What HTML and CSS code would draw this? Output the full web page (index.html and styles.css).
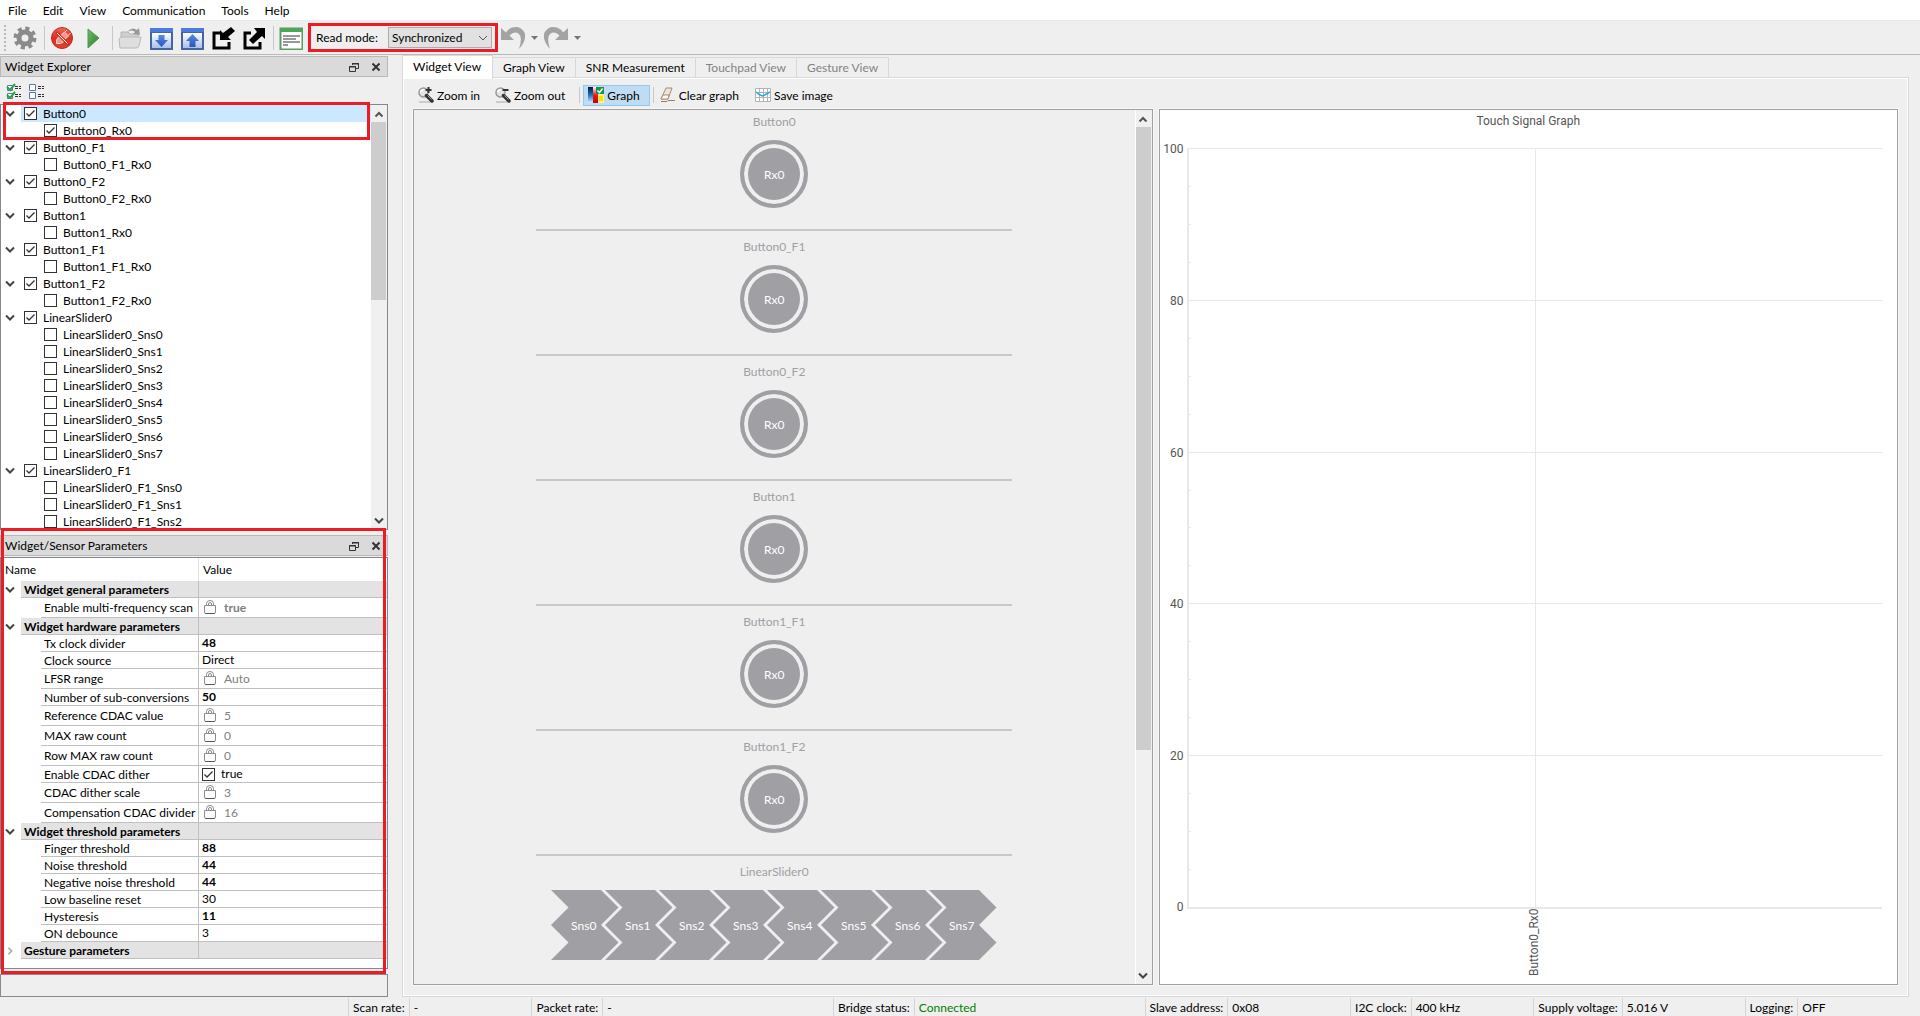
FILE: index.html
```html
<!DOCTYPE html>
<html lang="en">
<head>
<meta charset="utf-8">
<title>Tuner</title>
<link rel="stylesheet" href="styles.css">
</head>
<body>
<svg class="defs" aria-hidden="true">
  <defs>
    <linearGradient id="g-red" x1="0" y1="0" x2="0" y2="1"><stop offset="0" stop-color="#f06a55"/><stop offset=".5" stop-color="#d8301f"/><stop offset="1" stop-color="#e0442c"/></linearGradient>
    <linearGradient id="g-green" x1="0" y1="0" x2="1" y2="1"><stop offset="0" stop-color="#6cbf6a"/><stop offset="1" stop-color="#2c7a2c"/></linearGradient>
    <linearGradient id="g-pane" x1="0" y1="0" x2="0" y2="1"><stop offset="0" stop-color="#fff"/><stop offset="1" stop-color="#a9c0ea"/></linearGradient>
    <linearGradient id="g-arrow" x1="0" y1="0" x2="0" y2="1"><stop offset="0" stop-color="#5b8ae6"/><stop offset="1" stop-color="#2a55b8"/></linearGradient>
    <linearGradient id="g-heat" x1="0" y1="0" x2="0" y2="1"><stop offset="0" stop-color="#08182c"/><stop offset=".5" stop-color="#1573c4"/><stop offset="1" stop-color="#d8eefa"/></linearGradient>
    <linearGradient id="g-heat2" x1="0" y1="0" x2="0" y2="1"><stop offset="0" stop-color="#fff"/><stop offset=".5" stop-color="#f01818"/><stop offset="1" stop-color="#c80000"/></linearGradient>
  </defs>
  <symbol id="chev-down" viewBox="0 0 10 8"><path d="M1 1.500 5 5.500 9 1.500" fill="none" stroke="#444" stroke-width="2"/></symbol>
  <symbol id="chev-right" viewBox="0 0 10 10"><path d="M3 1 7 5 3 9" fill="none" stroke="#a8a8a8" stroke-width="2"/></symbol>
  <symbol id="chev-up" viewBox="0 0 10 8"><path d="M1.500 6.500 5 3 8.500 6.500" fill="none" stroke="#555" stroke-width="2"/></symbol>
  <symbol id="restore" viewBox="0 0 10 10"><path d="M3.500 3V1.500H9.500V6.500H7M3 1.500H10" fill="none" stroke="#333"/><path d="M.5 4.500H6.500V9.500H.5zM0 5H7M3 2H10" fill="none" stroke="#333"/></symbol>
  <symbol id="close" viewBox="0 0 10 10"><path d="M1.500 1.500 8.500 8.500M8.500 1.500 1.500 8.500" stroke="#333" stroke-width="2"/></symbol>
  <symbol id="lock" viewBox="0 0 14 15"><path d="M3.500 6V3.500Q3.500 .5 7 .5T10.500 3.500V6M5.500 6V4Q5.500 2.500 7 2.500T8.500 4V6" fill="none" stroke="#8a8a8a"/><path d="M1.500 5.500H12.500V12Q12.500 13.500 11 13.500H3Q1.500 13.500 1.500 12z" fill="#fdfdfd" stroke="#8c8c8c"/><path d="M2.500 13.500H11.500" stroke="#555"/></symbol>
  <symbol id="undo" viewBox="0 0 24 24"><path d="M0 2V14H13L8.500 9.500Q13 4.500 17.500 7.500 22 11 18 23 26 14 23.500 6.500 19.500-1 11 1.500 7 3 5 6.500z" fill="#a3a3a3"/></symbol>
  <symbol id="mag" viewBox="0 0 16 16"><path d="M1 15H13" stroke="#ccc" stroke-width="2"/><circle cx="5.500" cy="5.500" r="4.500" fill="#e4e4e4" stroke="#999" stroke-width="1.500"/><path d="M2.500 5Q3 3 6 2.500" stroke="#fff" fill="none" stroke-width="1.500"/><path d="M8.500 8.500 14 14" stroke="#333" stroke-width="3.500" stroke-linecap="round"/><path d="M9.500 8.500 13.500 12.500" stroke="#999"/></symbol>
  <symbol id="sensor" viewBox="0 0 68 70"><path d="M0 0H50L67.500 17.500 50 35 67.500 52.500 50 70H0L17.500 52.500 0 35 17.500 17.500z" fill="#a09fa4"/></symbol>
</svg>

<nav class="menubar">
  <button>File</button><button>Edit</button><button>View</button><button>Communication</button><button>Tools</button><button>Help</button>
</nav>

<header class="toolbar">
  <span class="grip"></span>
  <button class="tool" aria-label="Settings"><svg width="24" height="24" viewBox="0 0 24 24"><circle cx="12" cy="12" r="6" fill="none" stroke="#8b8b8b" stroke-width="5"/><circle cx="12" cy="12" r="9.500" fill="none" stroke="#8b8b8b" stroke-width="4" stroke-dasharray="4 3.460"/></svg></button>
  <span class="sep"></span>
  <button class="tool" aria-label="Disconnect"><svg width="24" height="24" viewBox="0 0 24 24"><circle cx="12" cy="12" r="10.500" fill="url(#g-red)" stroke="#c22a1c"/><path d="M6.500 17.500Q5.500 13 9 10.500L14 15.500Q11 18.500 6.500 17.500zM11 9 14.500 6 18.500 10 15.500 13zM15 6 17 4M18.500 9 20.500 7" fill="#ee9a8c" stroke="#f8d6d0"/><path d="M6 6 19 19" stroke="#d8301f" stroke-width="3"/><path d="M7 7 17.500 17.500" stroke="#fff"/></svg></button>
  <button class="tool" aria-label="Start"><svg width="24" height="24" viewBox="0 0 24 24"><path d="M7 3 18 12 7 22z" fill="url(#g-green)" stroke="#4d9a4c"/></svg></button>
  <span class="sep"></span>
  <button class="tool" aria-label="Open"><svg width="24" height="24" viewBox="0 0 24 24"><path d="M3 22V6H10L12 8H20V12" fill="#d0d0d0" stroke="#b5b5b5"/><path d="M1 13Q2 11 4 11H23L21 20Q20.500 22 18 22H2z" fill="#dedede" stroke="#b8b8b8"/><path d="M9 6Q14 0 19 4L21 2 22 9 15 8 17 6Q14 3 9 6z" fill="#999"/></svg></button>
  <button class="tool" aria-label="Read from device"><svg width="24" height="24" viewBox="0 0 24 24"><path d="M1 2H24V24H1z" fill="#46659f"/><path d="M1 2H24V6H1z" fill="#4a7ce0"/><path d="M3 7H22V22H3z" fill="url(#g-pane)"/><path d="M9.500 9H15.500V14H19L12.500 21 6 14H9.500z" fill="url(#g-arrow)"/></svg></button>
  <button class="tool" aria-label="Write to device"><svg width="24" height="24" viewBox="0 0 24 24"><path d="M1 2H24V24H1z" fill="#46659f"/><path d="M1 2H24V6H1z" fill="#4a7ce0"/><path d="M3 7H22V22H3z" fill="url(#g-pane)"/><path d="M9.500 21H15.500V15H19L12.500 8 6 15H9.500z" fill="url(#g-arrow)"/></svg></button>
  <button class="tool" aria-label="Import"><svg width="24" height="24" viewBox="0 0 24 24"><path d="M9 7H3V22H18V16" fill="none" stroke="#000" stroke-width="3"/><path d="M20 1 24 5 17 11 20 14H9V4L12 7z" fill="#000"/></svg></button>
  <button class="tool" aria-label="Export"><svg width="24" height="24" viewBox="0 0 24 24"><path d="M9 7H3V22H18V16" fill="none" stroke="#000" stroke-width="3"/><path d="M12 2H23V13L20 10 11 18 7 14 15 6z" fill="#000"/></svg></button>
  <span class="sep"></span>
  <button class="tool" aria-label="Log"><svg width="24" height="24" viewBox="0 0 24 24"><path d="M1.500 2.500H23.500V23.500H1.500z" fill="#fff" stroke="#5f9a62" stroke-width="2"/><path d="M1 2H24V6H1z" fill="#4ca857"/><path d="M4 10H21M4 13H17M4 16H21M4 19H9" stroke="#333"/></svg></button>
  <div class="read-mode marked">
    <label for="mode">Read mode:</label>
    <div class="combo">
      <select id="mode"><option>Synchronized</option><option>Asynchronous</option></select>
      <svg class="combo-arrow" width="10" height="8" viewBox="0 0 10 8"><path d="M1 2 5 6 9 2" fill="none" stroke="#555"/></svg>
    </div>
  </div>
  <button class="hist" aria-label="Undo"><svg width="24" height="24"><use href="#undo"/></svg><svg width="7" height="4" viewBox="0 0 7 4"><path d="M0 0H7L3.500 4z" fill="#777"/></svg></button>
  <button class="hist" aria-label="Redo"><svg class="flip" width="24" height="24"><use href="#undo"/></svg><svg width="7" height="4" viewBox="0 0 7 4"><path d="M0 0H7L3.500 4z" fill="#777"/></svg></button>
</header>

<main class="workspace">
  <aside class="docks">
    <section class="dock explorer">
      <h2 class="dock-title"><span>Widget Explorer</span><button aria-label="Float"><svg width="10" height="10"><use href="#restore"/></svg></button><button aria-label="Close"><svg width="10" height="10"><use href="#close"/></svg></button></h2>
      <div class="tree-tools">
        <button aria-label="Check all"><svg width="16" height="16" viewBox="0 0 16 16"><path d="M1.500 2.500H6.500V7.500H1.500zM1.500 10.500H6.500V15.500H1.500z" fill="#fff" stroke="#5c78a8"/><path d="M1 4 4 7 9 1M1 12 4 15 9 9" fill="none" stroke="#27a348" stroke-width="2"/><path d="M9 3.500H15M9 5.500H15M9 11.500H15M9 13.500H15" stroke="#333" stroke-dasharray="3 1"/></svg></button>
        <button aria-label="Uncheck all"><svg width="16" height="16" viewBox="0 0 16 16"><path d="M.5 1.500H6.500V7.500H.5zM.5 9.500H6.500V15.500H.5z" fill="#fff" stroke="#5c78a8"/><path d="M9 3.500H15M9 5.500H15M9 11.500H15M9 13.500H15" stroke="#333" stroke-dasharray="3 1"/></svg></button>
      </div>
      <div class="tree-frame">
        <ul class="tree">
          <li><div class="node selected"><svg class="exp"><use href="#chev-down"/></svg><label><input type="checkbox" checked>Button0</label></div>
            <ul><li><label><input type="checkbox" checked>Button0_Rx0</label></li></ul></li>
          <li><div class="node"><svg class="exp"><use href="#chev-down"/></svg><label><input type="checkbox" checked>Button0_F1</label></div>
            <ul><li><label><input type="checkbox">Button0_F1_Rx0</label></li></ul></li>
          <li><div class="node"><svg class="exp"><use href="#chev-down"/></svg><label><input type="checkbox" checked>Button0_F2</label></div>
            <ul><li><label><input type="checkbox">Button0_F2_Rx0</label></li></ul></li>
          <li><div class="node"><svg class="exp"><use href="#chev-down"/></svg><label><input type="checkbox" checked>Button1</label></div>
            <ul><li><label><input type="checkbox">Button1_Rx0</label></li></ul></li>
          <li><div class="node"><svg class="exp"><use href="#chev-down"/></svg><label><input type="checkbox" checked>Button1_F1</label></div>
            <ul><li><label><input type="checkbox">Button1_F1_Rx0</label></li></ul></li>
          <li><div class="node"><svg class="exp"><use href="#chev-down"/></svg><label><input type="checkbox" checked>Button1_F2</label></div>
            <ul><li><label><input type="checkbox">Button1_F2_Rx0</label></li></ul></li>
          <li><div class="node"><svg class="exp"><use href="#chev-down"/></svg><label><input type="checkbox" checked>LinearSlider0</label></div>
            <ul>
              <li><label><input type="checkbox">LinearSlider0_Sns0</label></li>
              <li><label><input type="checkbox">LinearSlider0_Sns1</label></li>
              <li><label><input type="checkbox">LinearSlider0_Sns2</label></li>
              <li><label><input type="checkbox">LinearSlider0_Sns3</label></li>
              <li><label><input type="checkbox">LinearSlider0_Sns4</label></li>
              <li><label><input type="checkbox">LinearSlider0_Sns5</label></li>
              <li><label><input type="checkbox">LinearSlider0_Sns6</label></li>
              <li><label><input type="checkbox">LinearSlider0_Sns7</label></li>
            </ul></li>
          <li><div class="node"><svg class="exp"><use href="#chev-down"/></svg><label><input type="checkbox" checked>LinearSlider0_F1</label></div>
            <ul>
              <li><label><input type="checkbox">LinearSlider0_F1_Sns0</label></li>
              <li><label><input type="checkbox">LinearSlider0_F1_Sns1</label></li>
              <li><label><input type="checkbox">LinearSlider0_F1_Sns2</label></li>
            </ul></li>
        </ul>
        <div class="scrollbar"><svg width="10" height="8"><use href="#chev-up"/></svg><span class="thumb tree-thumb"></span><svg width="10" height="8"><use href="#chev-down"/></svg></div>
        <span class="callout tree-callout"></span>
      </div>
    </section>

    <section class="dock params">
      <h2 class="dock-title"><span>Widget/Sensor Parameters</span><button aria-label="Float"><svg width="10" height="10"><use href="#restore"/></svg></button><button aria-label="Close"><svg width="10" height="10"><use href="#close"/></svg></button></h2>
      <div class="table-frame">
        <table>
          <thead><tr><th scope="col">Name</th><th scope="col">Value</th></tr></thead>
          <tbody>
            <tr class="group"><th><div><svg class="exp"><use href="#chev-down"/></svg><span>Widget general parameters</span></div></th><td></td></tr>
            <tr class="locked"><th><span>Enable multi-frequency scan</span></th><td><svg class="lock"><use href="#lock"/></svg><b>true</b></td></tr>
            <tr class="group"><th><div><svg class="exp"><use href="#chev-down"/></svg><span>Widget hardware parameters</span></div></th><td></td></tr>
            <tr><th><span>Tx clock divider</span></th><td><b>48</b></td></tr>
            <tr><th><span>Clock source</span></th><td>Direct</td></tr>
            <tr class="locked"><th><span>LFSR range</span></th><td><svg class="lock"><use href="#lock"/></svg>Auto</td></tr>
            <tr><th><span>Number of sub-conversions</span></th><td><b>50</b></td></tr>
            <tr class="locked"><th><span>Reference CDAC value</span></th><td><svg class="lock"><use href="#lock"/></svg>5</td></tr>
            <tr class="locked"><th><span>MAX raw count</span></th><td><svg class="lock"><use href="#lock"/></svg>0</td></tr>
            <tr class="locked"><th><span>Row MAX raw count</span></th><td><svg class="lock"><use href="#lock"/></svg>0</td></tr>
            <tr><th><span>Enable CDAC dither</span></th><td><label><input type="checkbox" checked>true</label></td></tr>
            <tr class="locked"><th><span>CDAC dither scale</span></th><td><svg class="lock"><use href="#lock"/></svg>3</td></tr>
            <tr class="locked"><th><span>Compensation CDAC divider</span></th><td><svg class="lock"><use href="#lock"/></svg>16</td></tr>
            <tr class="group"><th><div><svg class="exp"><use href="#chev-down"/></svg><span>Widget threshold parameters</span></div></th><td></td></tr>
            <tr><th><span>Finger threshold</span></th><td><b>88</b></td></tr>
            <tr><th><span>Noise threshold</span></th><td><b>44</b></td></tr>
            <tr><th><span>Negative noise threshold</span></th><td><b>44</b></td></tr>
            <tr><th><span>Low baseline reset</span></th><td>30</td></tr>
            <tr><th><span>Hysteresis</span></th><td><b>11</b></td></tr>
            <tr><th><span>ON debounce</span></th><td>3</td></tr>
            <tr class="group"><th><div><svg class="exp"><use href="#chev-right"/></svg><span>Gesture parameters</span></div></th><td></td></tr>
          </tbody>
        </table>
      </div>
      <span class="callout params-callout"></span>
    </section>
    <div class="progress"></div>
  </aside>

  <section class="views">
    <div class="tabs" role="tablist">
      <button role="tab" aria-selected="true">Widget View</button><button role="tab">Graph View</button><button role="tab">SNR Measurement</button><button role="tab" disabled>Touchpad View</button><button role="tab" disabled>Gesture View</button>
    </div>
    <div class="pane">
      <div class="view-tools">
        <button><svg width="16" height="16" viewBox="0 0 16 16"><use href="#mag"/><path d="M10.500 0V6M7.500 3H13.500" stroke="#333" stroke-width="2"/></svg>Zoom in</button>
        <button class="zoom-out"><svg width="16" height="16" viewBox="0 0 16 16"><use href="#mag"/><path d="M7.500 3H13.500" stroke="#333" stroke-width="2"/></svg>Zoom out</button>
        <span class="vsep"></span>
        <button class="on" aria-pressed="true"><svg width="16" height="16" viewBox="0 0 16 16"><path d="M0 0H5V16H0z" fill="url(#g-heat)"/><path d="M5 0H10V16H5z" fill="url(#g-heat2)"/><path d="M10 7H16V16H10z" fill="#fff38a"/><path d="M11 9H15V14H11z" fill="#ffe000"/><path d="M8 0H16V7H8z" fill="#16924a"/><path d="M9.500 3.500 11.500 5.500 14.500 1.500" fill="none" stroke="#fff" stroke-width="1.500"/></svg>Graph</button>
        <span class="vsep"></span>
        <button><svg width="16" height="16" viewBox="0 0 16 16"><path d="M6 1 12 1 8 12 1 12z" fill="#efe3d6" stroke="#a58d78"/><path d="M1 12 3 8 9 8 8 12z" fill="#fff" stroke="#a58d78"/><path d="M1 14.500H7L8 13.500H15" fill="none" stroke="#9a7a60"/></svg>Clear graph</button>
        <button class="save"><svg width="16" height="16" viewBox="0 0 16 16"><path d="M.5 1.500H15.500V14.500H.5zM.5 5.500H15.500M.5 10.500H15.500M4.500 1.500V14.500M8.500 1.500V14.500M12.500 1.500V14.500" fill="#fff" stroke="#b4b4b4"/><path d="M1 5 5 8 8 9 15 5" fill="none" stroke="#22aeda" stroke-width="1.500"/></svg>Save image</button>
      </div>
      <div class="split">
        <div class="sunken widget-view">
          <div class="canvas">
            <article class="widget"><h3>Button0</h3><div class="pad">Rx0</div></article>
            <article class="widget"><h3>Button0_F1</h3><div class="pad">Rx0</div></article>
            <article class="widget"><h3>Button0_F2</h3><div class="pad">Rx0</div></article>
            <article class="widget"><h3>Button1</h3><div class="pad">Rx0</div></article>
            <article class="widget"><h3>Button1_F1</h3><div class="pad">Rx0</div></article>
            <article class="widget"><h3>Button1_F2</h3><div class="pad">Rx0</div></article>
            <article class="widget slider"><h3>LinearSlider0</h3>
              <div class="sensors">
                <div><svg><use href="#sensor"/></svg><span>Sns0</span></div>
                <div><svg><use href="#sensor"/></svg><span>Sns1</span></div>
                <div><svg><use href="#sensor"/></svg><span>Sns2</span></div>
                <div><svg><use href="#sensor"/></svg><span>Sns3</span></div>
                <div><svg><use href="#sensor"/></svg><span>Sns4</span></div>
                <div><svg><use href="#sensor"/></svg><span>Sns5</span></div>
                <div><svg><use href="#sensor"/></svg><span>Sns6</span></div>
                <div><svg><use href="#sensor"/></svg><span>Sns7</span></div>
              </div></article>
          </div>
          <div class="scrollbar edge"><svg width="10" height="8"><use href="#chev-up"/></svg><span class="thumb view-thumb"></span><svg width="10" height="8"><use href="#chev-down"/></svg></div>
        </div>
        <figure class="sunken graph">
          <figcaption>Touch Signal Graph</figcaption>
          <div class="plot">
            <div class="band"><span>100</span><i></i><i></i><i></i></div>
            <div class="band"><span>80</span><i></i><i></i><i></i></div>
            <div class="band"><span>60</span><i></i><i></i><i></i></div>
            <div class="band"><span>40</span><i></i><i></i><i></i></div>
            <div class="band"><span>20</span><i></i><i></i><i></i></div>
            <div class="zero"><span>0</span></div>
          </div>
          <div class="category"><span>Button0_Rx0</span></div>
        </figure>
      </div>
    </div>
  </section>
</main>

<footer class="status">
  <dl>
    <dt>Scan rate:</dt><dd>-</dd>
    <dt>Packet rate:</dt><dd class="wide">-</dd>
    <dt>Bridge status:</dt><dd class="wide ok">Connected</dd>
    <dt>Slave address:</dt><dd>0x08</dd>
    <dt>I2C clock:</dt><dd>400 kHz</dd>
    <dt>Supply voltage:</dt><dd>5.016 V</dd>
    <dt>Logging:</dt><dd>OFF</dd>
  </dl>
</footer>
</body>
</html>
```
FILE: styles.css
```css
* { box-sizing: border-box; }
body {
  margin: 0;
  height: 100vh;
  display: flex;
  flex-direction: column;
  background: #efefef;
  color: #000;
  font: 12px/17px Lato, "Open Sans", sans-serif;
  overflow: hidden;
}
button, select, input { font: inherit; color: inherit; margin: 0; }
button { background: none; border: 0; padding: 0; }
h2, h3, ul, dl, dd, figure { margin: 0; padding: 0; font-size: 12px; font-weight: 400; list-style: none; }
svg { display: block; flex: none; }
.defs { position: absolute; width: 0; height: 0; }

input[type="checkbox"] {
  appearance: none;
  flex: none;
  width: 13px;
  height: 13px;
  margin: 0 6px 0 0;
  border: 1px solid #333;
  background: #fff;
}
input[type="checkbox"]:checked {
  background: #fff url("data:image/svg+xml,%3Csvg xmlns='http://www.w3.org/2000/svg' viewBox='0 0 11 11'%3E%3Cpath d='M1.500 5.500 4 8 9.500 2.500' fill='none' stroke='%23333' stroke-width='1.300'/%3E%3C/svg%3E");
}

/* menu and main toolbar */
.menubar {
  display: flex;
  gap: 16px;
  height: 21px;
  padding: 2px 8px 1px;
  background: #fff;
  border-bottom: 1px solid #ebebeb;
}
.toolbar {
  display: flex;
  align-items: center;
  height: 34px;
  padding-left: 4px;
  border-bottom: 1px solid #b9b9b9;
}
.grip { width: 2px; height: 26px; margin-right: 7px; background: repeating-linear-gradient(#bbb 0 2px, transparent 2px 4px); }
.tool { margin-right: 7px; }
.sep { width: 1px; height: 24px; margin-right: 5px; background: #c8c8c8; }
.marked { border: 3px solid #ed1c24; }
.read-mode { display: flex; align-items: center; width: 190px; height: 29px; margin-left: -2px; padding-left: 5px; }
.read-mode label { width: 72px; white-space: nowrap; }
.combo { position: relative; width: 104px; height: 21px; }
.combo select {
  appearance: none;
  width: 100%;
  height: 21px;
  padding: 0 18px 1px 3px;
  border: 1px solid #adadad;
  border-radius: 0;
  background: #e1e1e1;
}
.combo-arrow { position: absolute; right: 4px; top: 7px; }
.hist { display: flex; align-items: center; gap: 6px; margin: 0 3px; }
.flip { transform: scaleX(-1); }

/* left docks */
.workspace { flex: 1; min-height: 0; display: flex; gap: 14px; padding-top: 1px; }
.docks { flex: none; width: 388px; display: flex; flex-direction: column; }
.dock-title {
  display: flex;
  align-items: center;
  gap: 12px;
  height: 21px;
  padding: 0 6px 0 4px;
  background: #dadada;
  border: 1px solid #b9b9b9;
}
.dock-title span { flex: 1; }
.explorer { flex: 1; min-height: 0; display: flex; flex-direction: column; }
.tree-tools { display: flex; gap: 7px; padding: 6px 6px 5px; }
.tree-frame {
  position: relative;
  flex: 1;
  min-height: 0;
  display: flex;
  background: #fff;
  border: 1px solid #828790;
}
.tree { flex: 1; overflow: hidden; }
.tree label { display: flex; align-items: center; height: 17px; }
.node { display: flex; align-items: center; padding-left: 4px; }
.node label { flex: 1; padding-left: 3px; margin-left: 6px; }
.node.selected label { background: #cce8ff; }
.tree ul { padding-left: 43px; }
.exp { width: 10px; height: 8px; }
.scrollbar {
  flex: none;
  width: 16px;
  display: flex;
  flex-direction: column;
  align-items: center;
  justify-content: space-between;
  padding: 5px 1px 4px 0;
  background: #f0f0f0;
}
.thumb { width: 15px; background: #cdcdcd; margin-top: 4px; }
.scrollbar svg:last-child { margin-top: auto; }
.tree-thumb { height: 43%; }
.callout { position: absolute; border: 3px solid #ed1c24; pointer-events: none; }
.tree-callout { left: 2px; right: 17px; top: -3px; height: 38px; }

.params { position: relative; padding-top: 5px; }
.params-callout { left: 1px; right: 2px; top: -2px; bottom: -5px; }
.table-frame { margin-top: 1px; background: #fff; border: 1px solid #828790; padding-bottom: 9px; }
table { width: 100%; border-collapse: separate; border-spacing: 0; table-layout: fixed; }
th, td { padding: 0; height: 17px; text-align: left; font-weight: 400; vertical-align: top; line-height: 17px; white-space: nowrap; }
thead th { height: 23px; padding-left: 4px; line-height: 23px; }
thead th:first-child { width: 198px; border-right: 1px solid #e2e2e2; }
tbody th { padding-left: 40px; border-right: 1px solid #c0c0c0; overflow: hidden; }
tbody th span { display: block; height: 17px; padding-left: 3px; border-bottom: 1px solid #c0c0c0; }
tbody td { padding-left: 3px; border-bottom: 1px solid #c0c0c0; line-height: 16px; }
td label { display: flex; align-items: center; height: 16px; }
.group th { padding-left: 4px; font-weight: 700; }
.group div { display: flex; align-items: center; }
.group span { flex: 1; margin-left: 6px; background: #e3e3e3; }
.group td { background: #e3e3e3; }
.locked td { height: 20px; line-height: 19px; color: #808080; }
.locked th span { height: 20px; line-height: 20px; }
.lock { float: left; width: 14px; height: 15px; margin: 2px 7px 0 1px; }
.progress { height: 23px; margin: 5px 0 0; border: 1px solid #8a8a8a; }

/* tabbed views */
.views { flex: 1; min-width: 0; display: flex; flex-direction: column; padding-right: 11px; }
.tabs { display: flex; align-items: flex-end; height: 21px; }
.tabs button { height: 20px; padding: 0 10px; border: solid #d9d9d9; border-width: 1px 1px 0 0; line-height: 18px; }
.tabs button:disabled { color: #838383; }
.tabs button[aria-selected="true"] { height: 24px; margin-bottom: -2px; padding: 0 11px 2px 10px; border-left-width: 1px; background: #fff; z-index: 1; }
.pane { flex: 1; min-height: 0; display: flex; flex-direction: column; padding: 5px 10px 11px; border: 1px solid #d9d9d9; box-shadow: inset 0 0 0 1px #fff; }
.view-tools { display: flex; align-items: center; height: 24px; padding: 0 5px; }
.view-tools button { display: flex; align-items: center; gap: 3px; height: 21px; }
.view-tools .zoom-out { margin-left: 15px; }
.view-tools .save { margin-left: 16px; }
.view-tools .on { padding: 0 9px 0 4px; background: #c0dcf3; border: 1px solid #90c8f6; }
.vsep { width: 1px; height: 16px; margin: 0 6px 0 3px; background: #c8c8c8; }
.zoom-out + .vsep { margin: 0 3px 0 14px; }
.split { flex: 1; min-height: 0; display: grid; grid-template-columns: 1fr 1fr; gap: 6px; padding-top: 2px; }
.sunken { min-height: 0; border: 1px solid #a0a0a0; outline: 1px solid #f8f8f8; }
.widget-view { display: flex; }
.canvas { flex: 1; overflow: hidden; }
.edge { width: 17px; border-left: 1px solid #fff; }
.view-thumb { height: 72%; }
.widget {
  width: 66%;
  height: 125px;
  margin: 0 auto;
  padding-top: 7px;
  display: flex;
  flex-direction: column;
  align-items: center;
  color: #fff;
  border-bottom: 2px solid #c8c8c8;
}
.widget:first-child { height: 121px; padding-top: 3px; }
.widget h3 { color: #a09fa4; margin-bottom: 10px; }
.pad {
  width: 68px;
  height: 68px;
  border: 4px solid #a09fa4;
  border-radius: 50%;
  background: #a09fa4;
  box-shadow: inset 0 0 0 4px #efefef;
  text-align: center;
  line-height: 61px;
}
.widget.slider { border: 0; }
.sensors { display: flex; margin-right: 14px; }
.sensors div { position: relative; display: grid; width: 54px; height: 70px; place-items: center; }
.sensors svg { position: absolute; left: 0; top: 0; width: 68px; height: 70px; }
.sensors span { position: relative; padding-left: 11px; }

/* signal graph */
.graph { display: flex; flex-direction: column; background: #fff; color: #555; padding: 3px 15px 6px 27px; font-family: Roboto, sans-serif; }
figcaption { margin: 0 -15px 18px -27px; text-align: center; }
.plot { flex: 1; display: flex; flex-direction: column; border-left: 2px solid #e8e8e8; background: linear-gradient(#e8e8e8, #e8e8e8) 50% 0 / 1px 100% no-repeat; }
.band { flex: 1; position: relative; display: flex; flex-direction: column; justify-content: space-evenly; border-top: 1px solid #e8e8e8; }
.band i { width: 2px; height: 1px; background: #e8e8e8; }
.band span, .zero span { position: absolute; right: 100%; top: -8px; margin-right: 5px; }
.zero { position: relative; height: 2px; background: #e8e8e8; }
.category { display: flex; justify-content: center; height: 69px; padding: 2px 0; }
.category span { writing-mode: vertical-rl; transform: rotate(180deg); line-height: 16px; }

/* status bar */
.status { height: 19px; padding: 1px 0 0 348px; }
.status dl { display: flex; height: 18px; }
.status dt, .status dd { padding: 1px 4px 0; border-left: 1px solid #d4d4d4; white-space: nowrap; }
.status dd { flex: 121 1 0; }
.status dd.wide { flex-grow: 236; }
.status .ok { color: #008000; }
```
